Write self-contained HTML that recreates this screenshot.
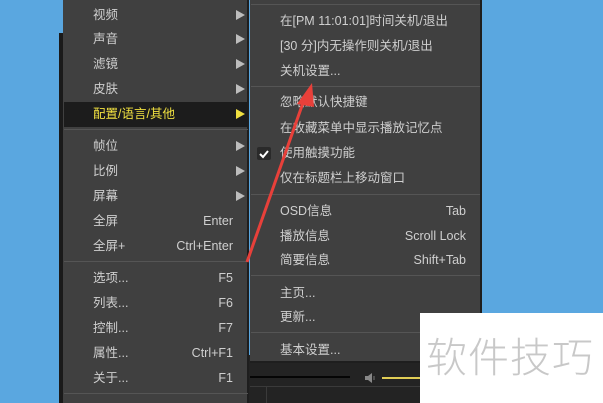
<!DOCTYPE html>
<html><head><meta charset="utf-8"><style>
*{margin:0;padding:0;box-sizing:border-box}
body{width:603px;height:403px;overflow:hidden;background:#5aa7e0;position:relative;font-family:"Liberation Sans","Noto Sans CJK SC",sans-serif;font-size:12.5px;color:#cfcfcf}
.abs{position:absolute}
.it{position:absolute;height:24px;line-height:24px;white-space:nowrap}
.sc{position:absolute;right:0;text-align:right}
.ar{position:absolute;width:0;height:0;border-top:5px solid transparent;border-bottom:5px solid transparent;border-left:9px solid #bdbdbd}
.sep{position:absolute;height:1px;background:#262626;border-bottom:1px solid #555}
</style></head><body>
<!-- player dark area -->
<div class="abs" style="left:59px;top:33px;width:5px;height:370px;background:#1a1a1a"></div>
<div class="abs" style="left:248px;top:355px;width:180px;height:48px;background:#232323"></div>
<div class="abs" style="left:250px;top:376px;width:100px;height:2px;background:#050505"></div>
<div class="abs" style="left:250px;top:386px;width:180px;height:1px;background:#3a3a3a"></div>
<div class="abs" style="left:266px;top:387px;width:1px;height:16px;background:#3a3a3a"></div>
<svg class="abs" style="left:364px;top:372px" width="14" height="12"><path d="M1 4h3l4-3v10l-4-3H1z" fill="#888"/><path d="M10 4v4" stroke="#777"/></svg>
<div class="abs" style="left:382px;top:377px;width:40px;height:2px;background:#e0cc55"></div>
<!-- left menu -->
<div class="abs" style="left:63px;top:0;width:186px;height:403px;background:#404040;border-right:2px solid #1e1e1e"></div>
<div class="abs" style="left:64px;top:102px;width:184px;height:25px;background:#1c1c1c"></div>
<div class="it" style="left:93px;top:3px">视频</div><div class="ar" style="left:236px;top:10px"></div>
<div class="it" style="left:93px;top:27px">声音</div><div class="ar" style="left:236px;top:34px"></div>
<div class="it" style="left:93px;top:52px">滤镜</div><div class="ar" style="left:236px;top:59px"></div>
<div class="it" style="left:93px;top:77px">皮肤</div><div class="ar" style="left:236px;top:84px"></div>
<div class="it" style="left:93px;top:102px;color:#f0e040">配置/语言/其他</div><div class="ar" style="left:236px;top:109px;border-left-color:#f0e040"></div>
<div class="sep" style="left:64px;top:129px;width:184px"></div>
<div class="it" style="left:93px;top:134px">帧位</div><div class="ar" style="left:236px;top:141px"></div>
<div class="it" style="left:93px;top:159px">比例</div><div class="ar" style="left:236px;top:166px"></div>
<div class="it" style="left:93px;top:184px">屏幕</div><div class="ar" style="left:236px;top:191px"></div>
<div class="it" style="left:93px;top:209px;width:140px">全屏<span class="sc">Enter</span></div>
<div class="it" style="left:93px;top:234px;width:140px">全屏+<span class="sc">Ctrl+Enter</span></div>
<div class="sep" style="left:64px;top:261px;width:184px"></div>
<div class="it" style="left:93px;top:266px;width:140px">选项...<span class="sc">F5</span></div>
<div class="it" style="left:93px;top:291px;width:140px">列表...<span class="sc">F6</span></div>
<div class="it" style="left:93px;top:316px;width:140px">控制...<span class="sc">F7</span></div>
<div class="it" style="left:93px;top:341px;width:140px">属性...<span class="sc">Ctrl+F1</span></div>
<div class="it" style="left:93px;top:366px;width:140px">关于...<span class="sc">F1</span></div>
<div class="sep" style="left:64px;top:393px;width:184px"></div>
<!-- right menu -->
<div class="abs" style="left:250px;top:0;width:232px;height:363px;background:#404040;border-right:2px solid #1e1e1e;border-bottom:2px solid #1e1e1e"></div>
<div class="sep" style="left:251px;top:4px;width:229px"></div>
<div class="it" style="left:280px;top:9px">在[PM 11:01:01]时间关机/退出</div>
<div class="it" style="left:280px;top:34px">[30 分]内无操作则关机/退出</div>
<div class="it" style="left:280px;top:59px">关机设置...</div>
<div class="sep" style="left:251px;top:86px;width:229px"></div>
<div class="it" style="left:280px;top:90px">忽略默认快捷键</div>
<div class="it" style="left:280px;top:116px">在收藏菜单中显示播放记忆点</div>
<div class="abs" style="left:257px;top:147px;width:14px;height:13px;background:#2a2a2a;border-radius:2px"></div>
<svg class="abs" style="left:257px;top:147px" width="14" height="13"><path d="M3 7l3 3 5-6" stroke="#fff" stroke-width="2" fill="none"/></svg>
<div class="it" style="left:280px;top:141px">使用触摸功能</div>
<div class="it" style="left:280px;top:166px">仅在标题栏上移动窗口</div>
<div class="sep" style="left:251px;top:194px;width:229px"></div>
<div class="it" style="left:280px;top:199px;width:186px">OSD信息<span class="sc">Tab</span></div>
<div class="it" style="left:280px;top:224px;width:186px">播放信息<span class="sc">Scroll Lock</span></div>
<div class="it" style="left:280px;top:248px;width:186px">简要信息<span class="sc">Shift+Tab</span></div>
<div class="sep" style="left:251px;top:275px;width:229px"></div>
<div class="it" style="left:280px;top:281px">主页...</div>
<div class="it" style="left:280px;top:305px">更新...</div>
<div class="sep" style="left:251px;top:332px;width:229px"></div>
<div class="it" style="left:280px;top:338px">基本设置...</div>
<!-- red arrow -->
<svg class="abs" style="left:0;top:0" width="603" height="403"><path d="M247 262L304 100" stroke="#e8403a" stroke-width="3"/><path d="M312 83L297 104L314 107Z" fill="#e8403a"/></svg>
<!-- watermark -->
<div class="abs" style="left:420px;top:313px;width:183px;height:90px;background:#fff"></div>
<div class="abs" style="left:426px;top:326px;font-size:41px;line-height:56px;color:#c8c8c8;letter-spacing:1px;font-family:'Noto Sans CJK SC',sans-serif;font-weight:300">软件技巧</div>
</body></html>
